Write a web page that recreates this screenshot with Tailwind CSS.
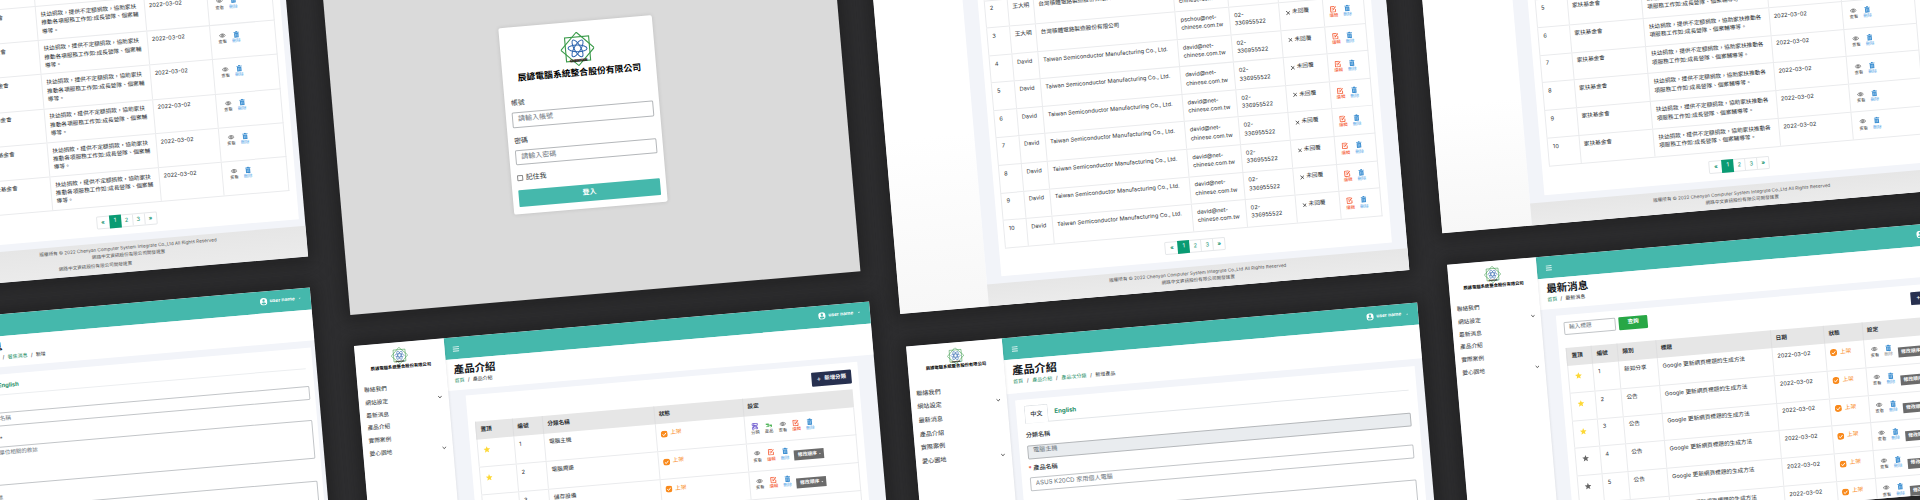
<!DOCTYPE html>
<html>
<head>
<meta charset="utf-8">
<title>Admin screens showcase</title>
<script src="https://cdn.jsdelivr.net/npm/@tailwindcss/browser@4"></script>
</head>
<body class="bg-[#303032]">
<svg class="hidden" xmlns="http://www.w3.org/2000/svg">
  <symbol id="eye" viewBox="0 0 16 16"><path d="M1 8C4 3.2 12 3.2 15 8C12 12.8 4 12.8 1 8Z" fill="none" stroke="#444" stroke-width="1.2"/><circle cx="8" cy="8" r="2.6" fill="none" stroke="#444" stroke-width="1.3"/><circle cx="8" cy="8" r="1" fill="#444"/></symbol>
  <symbol id="trash" viewBox="0 0 16 16"><path d="M2 2.5H5.5L6.5 .5H9.5L10.5 2.5H14V4.2H2Z" fill="#3d8fd1"/><path d="M3 5H13V15.5H3Z" fill="#3d8fd1"/><path d="M6.3 7V13M9.7 7V13" stroke="#d7eafa" stroke-width="1.1"/></symbol>
  <symbol id="edit" viewBox="0 0 16 16"><path d="M13 8V14.5H2V2H11" fill="none" stroke="#f4552c" stroke-width="1.8"/><path d="M4.5 6H8M4.5 9H6" stroke="#f4552c" stroke-width="1.3"/><path d="M14.5 3L8 10.5L5.8 11.6L6.6 9L13 1.8Z" fill="#f4552c"/></symbol>
  <symbol id="tree" viewBox="0 0 16 16"><path d="M2 1.5H14V6H2ZM2 10.5H6V14.5H2ZM10 10.5H14V14.5H10ZM4 10.5V8H12V10.5M8 6V8M6 1.5V6" fill="none" stroke="#5b45c9" stroke-width="1.6"/></symbol>
  <symbol id="goods" viewBox="0 0 16 16"><path d="M1 4H8V7H15V11H11V9H5V7H1Z" fill="#3fae49"/><path d="M2 11H9M12 13L15 11" stroke="#3fae49" stroke-width="1.6"/></symbol>
  <symbol id="check" viewBox="0 0 16 16"><circle cx="8" cy="8" r="8" fill="#f98a1c"/><path d="M4 8.3L7 11L12 5.4" fill="none" stroke="#fff" stroke-width="2"/></symbol>
  <symbol id="star" viewBox="0 0 16 16"><path d="M8 .5L10.1 5.8L15.8 6.2L11.4 9.8L12.8 15.3L8 12.3L3.2 15.3L4.6 9.8L.2 6.2L5.9 5.8Z" fill="currentColor"/></symbol>
  <symbol id="cross" viewBox="0 0 16 16"><path d="M1 1L15 15M15 1L1 15" stroke="#222" stroke-width="2.2"/></symbol>
  <symbol id="chev" viewBox="0 0 16 16"><path d="M2 4.5L8 11L14 4.5" fill="none" stroke="#333" stroke-width="2.6"/></symbol>
  <symbol id="user" viewBox="0 0 16 16"><circle cx="8" cy="8" r="7.8" fill="#fff"/><circle cx="8" cy="5.6" r="2.5" fill="#45b8ac"/><path d="M3.2 12C4.4 8.8 11.6 8.8 12.8 12C10.5 14.4 5.5 14.4 3.2 12Z" fill="#45b8ac"/></symbol>
  <symbol id="logo" viewBox="0 0 40 40">
    <g fill="none" stroke="#3b9b4b" stroke-width="1.3"><rect x="6" y="6" width="28" height="28"/><path d="M20 .6L39.4 20L20 39.4L.6 20Z"/></g>
    <g fill="none" stroke="#2f66ae" stroke-width="1.2"><ellipse cx="20" cy="19.4" rx="11" ry="3.8" transform="rotate(5 20 19.4)"/><ellipse cx="20" cy="19.4" rx="11" ry="3.8" transform="rotate(65 20 19.4)"/><ellipse cx="20" cy="19.4" rx="11" ry="3.8" transform="rotate(125 20 19.4)"/></g>
    <text x="20" y="34.8" font-family="Inter" font-size="3.9" font-weight="900" text-anchor="middle" fill="#32201f" stroke="#32201f" stroke-width=".3">CHENYAN</text>
  </symbol>
</svg>

<main class="relative h-[500px] w-[1920px] overflow-hidden bg-[#303032] font-['Inter','Noto_Sans_CJK_TC',sans-serif] text-[5.65px] leading-[8.4px] text-[#2b2f33] [text-rendering:geometricPrecision]">
  <div id="stage" class="absolute left-0 top-0 h-0 w-0 origin-top-left -rotate-[4.92deg]"></div>
</main>

<script>
const icon = (id, cls) => `<svg class="${cls} shrink-0"><use href="#${id}"/></svg>`;
const COMPANY = '辰諺電腦系統整合股份有限公司';

const act = (id, label, cls) => `<div class="flex w-[13.8px] flex-col items-center gap-[1.2px] text-[4.3px] leading-[5px] ${cls}">${icon(id, 'size-[7px]')}<span class="whitespace-nowrap">${label}</span></div>`;
const view = act('eye', '查看', 'text-[#444]');
const edit = act('edit', '編輯', 'text-[#f4552c]');
const del = act('trash', '刪除', 'text-[#4aa0e6]');
const delGray = act('trash', '刪除', 'text-[#8a8a8a]');
const order = `<div class="ml-[2.5px] mt-[4px] flex h-[10px] w-[30px] shrink-0 items-center justify-center gap-[2px] bg-[#6b6b6b] text-[4.8px] font-bold text-white">修改順序<span class="border-x-[1px] border-t-[1px] border-x-transparent border-t-white"></span></div>`;
const acts = (...a) => `<div class="flex pl-[2.8px] pt-[6.4px]">${a.join('')}</div>`;
const txt = (t, cls = '') => `<div class="whitespace-nowrap pl-[4.2px] pt-[4.9px] ${cls}">${t}</div>`;
const star = c => `<div class="pl-[5.4px] pt-[7px] ${c}">${icon('star', 'size-[7px]')}</div>`;
const onShelf = `<div class="flex items-center gap-[2.8px] pl-[4px] pt-[6px] text-[#f98a1c]">${icon('check', 'size-[7.2px]')}上架</div>`;
const noReply = `<div class="flex items-center gap-[2px] whitespace-nowrap pl-[6px] pt-[5.8px]">${icon('cross', 'size-[4.8px]')}未回覆</div>`;

const row = (grid, h, cells) => `<div class="grid ${grid} ${h} border-b border-r border-[#eaebed]">${cells.map(c => `<div class="border-l border-[#eaebed]">${c}</div>`).join('')}</div>`;
const head = (grid, names) => `<div class="grid ${grid} h-[17.7px] bg-[#e6e6e6] font-bold">${names.map(n => `<div class="flex items-center border-l border-[#dededf] pl-[4px]">${n}</div>`).join('')}</div>`;

const pager = `<div class="mx-auto flex h-[13.4px] w-[61px] rounded-[1.5px] border border-[#e6e8ea] text-center text-[5.6px] leading-[12px] text-[#15936f]"><span class="w-[12px] font-bold">«</span><span class="-my-px w-[12px] bg-[#0a9b73] leading-[13.4px] text-white">1</span><span class="w-[12px] border-r border-[#e6e8ea]">2</span><span class="w-[12px] border-r border-[#e6e8ea]">3</span><span class="w-[11px] font-bold">»</span></div>`;
const footLines = `<div class="whitespace-nowrap text-[4.6px]">版權所有 © 2022 Chenyan Computer System Integrate Co.,Ltd All Rights Reserved</div><div class="text-[4.6px]">網路中文資訊股份有限公司開發建置</div>`;

const topPanel = (box, side, foot, pad, card, body) => `
<section class="absolute ${box} flex overflow-hidden bg-white shadow-[0_0_18px_6px_rgba(20,20,20,0.55)]">
  <aside class="${side} shrink-0 bg-gradient-to-b from-white via-white to-[#f7f7f7]"></aside>
  <div class="flex min-w-0 flex-1 flex-col justify-end bg-[#f2f4f9]">
    <div class="flex flex-1 flex-col justify-end ${pad}"><div class="flex flex-1 flex-col justify-end bg-white ${card}">${body}</div></div>
    <footer class="${foot} shrink-0 bg-gradient-to-b from-[#e6e6e6] to-[#ebebeb] pt-[4.6px] text-center leading-[7.1px] text-[#555]">${footLines}</footer>
  </div>
</section>`;

const sidebar = (w, gap, first, size) => `
<aside class="${w} relative z-10 shrink-0 bg-white shadow-[0_0_3px_rgba(0,0,0,0.12)]">
  <div class="flex flex-col items-center pt-[5px] text-center">${icon('logo', 'size-[17px]')}<div class="mt-[0.5px] whitespace-nowrap text-[4.34px] font-bold leading-[6.6px] text-black">${COMPANY}</div></div>
  <nav class="${first} ${size} flex flex-col px-[6.1px]">${['聯絡我們', '網站設定', '最新消息', '產品介紹', '實際案例', '愛心園地'].map((m, i) => `<div class="flex ${gap} items-center justify-between"><span>${m}</span>${i === 1 || i === 5 ? icon('chev', 'size-[4.6px] -translate-y-[1px]') : ''}</div>`).join('')}</nav>
</aside>`;

const crumbs = (links, last) => links.map(l => `<span class="text-[#1f8f67]">${l}</span><span>/</span>`).join('') + `<span>${last}</span>`;
const topbar = (h) => `
<header class="${h} flex shrink-0 items-center justify-between bg-[#45b8ac] pl-[8.6px] pr-[10px] text-white">
  <svg class="h-[5.4px] w-[6.4px] translate-y-[1px]" viewBox="0 0 12 10"><path d="M0 1H12M0 5H12M0 9H12" stroke="#fff" stroke-width="1.5"/></svg>
  <div class="flex -translate-y-[0.6px] items-center gap-[2.4px] text-[4.9px] font-bold">${icon('user', 'size-[7.6px]')}user name<span class="ml-[2px] border-x-[1px] border-t-[1px] border-x-transparent border-t-white"></span></div>
</header>`;
const screen = (box, side, barH, titleBox, titleSize, title, trail, body) => `
<section class="absolute ${box} flex overflow-hidden bg-[#f2f4f9] shadow-[0_0_18px_6px_rgba(20,20,20,0.55)]">
  ${side}
  <div class="flex min-w-0 flex-1 flex-col">
    ${topbar(barH)}
    <div class="${titleBox} shrink-0 bg-white pl-[7.6px] pt-[4.2px]">
      <h1 class="${titleSize} whitespace-nowrap font-bold leading-[13px] text-[#15181c]">${title}</h1>
      <div class="mt-[2.2px] flex gap-[3.2px] whitespace-nowrap text-[5px] leading-[7px]">${trail}</div>
    </div>
    ${body}
  </div>
</section>`;

/* donation list, narrow */
const gA = 'grid-cols-[26px_66px_108.7px_63.2px_66.1px]';
const bodyA = `<div class="border-t border-[#eaebed]">${[4, 5, 6, 7, 8, 9, 10].map(n => row(gA, 'h-[34.15px]', [
  txt(n), txt('家扶基金會'), txt('扶幼捐款，提供不定額捐款，協助家扶<br>推動各項服務工作如:成長營隊、個案輔<br>導等。'), txt('2022-03-02'), acts(view, del).replace('pl-[2.8px]', 'pl-[4.5px]')])).join('')}</div><div class="pb-[6.6px] pt-[9px]">${pager}</div>`;
const panelA = `
<section class="absolute left-[-164px] top-[-60px] flex h-[341.8px] w-[448.6px] flex-col overflow-hidden bg-[#f2f4f9] shadow-[0_0_18px_6px_rgba(20,20,20,0.55)]">
  <div class="mb-[6.6px] ml-[99px] mr-[5.4px] flex min-h-0 flex-1 flex-col justify-end bg-white px-[7px]">${bodyA}</div>
  <footer class="h-[31.3px] shrink-0 bg-gradient-to-b from-[#e6e6e6] to-[#ebebeb] pt-[4.6px] text-center leading-[7.2px] text-[#555]">
    <div class="pl-[92px]">${footLines}</div><div class="pl-[24px] pt-[1px] text-[4.6px]">網路中文資訊股份有限公司開發建置</div>
  </footer>
</section>`;

/* login */
const field = (label, ph) => `<div class="text-[6.8px] leading-[9px]">${label}</div><div class="mt-[5px] flex h-[15.8px] items-center rounded-[1.5px] border border-[#b4b7ba] pl-[4.8px] text-[7px] text-[#6c757d]">${ph}</div>`;
const panelB = `
<section class="absolute left-[322.3px] top-[-10px] h-[353.7px] w-[512px] bg-[#dadada] pl-[171.7px] pt-[80.9px] shadow-[0_0_18px_6px_rgba(20,20,20,0.55)]">
  <div class="h-[187.6px] w-[154px] rounded-[2px] bg-white px-[6.3px] pt-[10.4px] shadow-[0_0_4px_rgba(0,0,0,0.12)]">
    <div class="flex flex-col items-center">${icon('logo', 'size-[34.5px]')}<div class="whitespace-nowrap text-[8.86px] font-bold leading-[14px] text-black">${COMPANY}</div></div>
    <div class="mt-[12px]">${field('帳號', '請輸入帳號')}</div>
    <div class="mt-[8px]">${field('密碼', '請輸入密碼')}</div>
    <div class="mt-[8px] flex items-center gap-[2.6px] text-[6.9px] leading-[9px]"><span class="size-[5.8px] rounded-[1px] border border-[#888]"></span>記住我</div>
    <div class="mt-[7.6px] flex h-[17.2px] items-center justify-center rounded-[1px] bg-[#45b8ac] text-[7px] font-bold text-white">登入</div>
  </div>
</section>`;

/* contact list */
const gC = 'grid-cols-[22.5px_26px_140.4px_53.8px_49.5px_44.5px_40.7px]';
const people = [['王大明', '台灣積體電路製造股份有限公司', 'pschou'], ['王大明', '台灣積體電路製造股份有限公司', 'pschou'], ['王大明', '台灣積體電路製造股份有限公司', 'pschou']];
const bodyC = [1, 2, 3, 4, 5, 6, 7, 8, 9, 10].map(n => {
  const p = people[n - 1] || ['David', 'Taiwan Semiconductor Manufacturing Co., Ltd.', 'david'];
  return row(gC, 'h-[27.57px]', [txt(n), txt(p[0]), txt(p[1]), txt(p[2] + '@net-<br>chinese.com.tw'), txt('02-<br>336955522'), noReply, acts(edit, del)]);
}).join('') + `<div class="pb-[6.7px] pt-[7.2px]">${pager}</div>`;
const panelC = topPanel('left-[869.5px] top-[40px] h-[350.3px] w-[511.2px]', 'w-[89.5px]', 'h-[22.6px]', 'px-[15px] pb-[6.8px]', 'px-[6.4px]', bodyC);

/* donation list, wide */
const gF = 'grid-cols-[31.1px_74.7px_125.4px_73.3px_74.1px]';
const bodyF = [4, 5, 6, 7, 8, 9, 10].map(n => row(gF, 'h-[27.85px]', [txt(n), txt('家扶基金會'), txt('扶幼捐款，提供不定額捐款，協助家扶推動各<br>項服務工作如:成長營隊、個案輔導等。'), txt('2022-03-02'), acts(view, del).replace('pl-[2.8px]', 'pl-[3.9px]')])).join('') + `<div class="pb-[6.4px] pt-[8px]">${pager}</div>`;
const panelF = topPanel('left-[1416.7px] top-[100px] h-[256.1px] w-[514px]', 'w-[90px]', 'h-[21.7px]', 'px-[15px] pb-[7.7px]', 'pl-[7.8px] pr-[7.6px]', bodyF);

/* news form */
const panelA2 = screen('left-[-77px] top-[312.8px] h-[240px] w-[361.4px]', '', 'h-[22.1px]', 'h-[31.6px]', 'text-[10.5px]', '最新消息', crumbs(['首頁', '最新消息', '著焦消息'], '新增'), `
  <div class="ml-[8px] mr-[4px] mt-[7px] flex-1 bg-white pl-[7px] pr-[5px] pt-[4px]">
    <div class="mr-[2px] flex h-[17px] items-center border-b border-[#eceef0]"><span class="w-[27px] pl-[6px]">中文</span><span class="text-[5.8px] font-bold text-[#1f8f67]">English</span></div>
    <div class="mt-[7px] leading-[8px]">標題</div>
    <div class="mt-[1.5px] flex h-[13.6px] items-center rounded-[1.5px] border border-[#c2c5c8] pl-[8px] text-[#6c757d]">請輸入名稱</div>
    <div class="mt-[9px] leading-[8px]">單位敘述 <span class="text-[#444]">*</span></div>
    <div class="mt-[3px] h-[39.6px] rounded-[1.5px] border border-[#c2c5c8] pl-[5px] pt-[2.6px] text-[5.5px] text-[#6c757d]">請輸入單位相關的敘述</div>
    <div class="mt-[9px] leading-[8px] text-[#555]">產品描述</div>
    <div class="mt-[4.6px] h-[40px] rounded-[1.5px] border border-[#c2c5c8]"></div>
  </div>`);

/* product categories */
const gD = 'grid-cols-[37px_30px_111.8px_89px_110.6px]';
const addBtn = t => `<div class="flex h-[13.8px] w-[40.6px] shrink-0 items-center justify-center gap-[3.4px] rounded-[1px] bg-[#27304f] text-[5.4px] font-bold text-white"><span class="text-[7px] font-normal">+</span>${t}</div>`;
const Y = 'text-[#fdd835]', K = 'text-[#666]';
const panelD = screen('left-[323.3px] top-[375px] h-[260px] w-[516.4px]', sidebar('w-[89.4px]', 'h-[12.7px]', 'mt-[11px]', 'text-[5.7px]'), 'h-[21.7px]', 'h-[31.1px]', 'text-[10.5px]', '產品介紹', crumbs(['首頁'], '產品介紹'), `
  <div class="ml-[17.3px] mr-[16.6px] mt-[6.7px] flex-1 bg-white px-[7px] pt-[6.8px]">
    <div class="mb-[6.4px] flex justify-end">${addBtn('新增分類')}</div>
    ${head(gD, ['置頂', '編號', '分類名稱', '狀態', '設定'])}
    ${[['電腦主機', acts(act('tree', '分類', 'text-[#444]'), act('goods', '產品', 'text-[#444]'), view, edit, del)], ['電腦周邊', acts(view, edit, del, order)], ['儲存設備', acts(view, edit, del, order)], ['網路設備', acts(view, edit, del, order)]].map((r, i) => row(gD, 'h-[27.85px]', [star(Y), txt(i + 1), txt(r[0]), onShelf, r[1]])).join('')}
  </div>`);

/* product form */
const panelE = screen('left-[873px] top-[422.7px] h-[260px] w-[512.6px]', sidebar('w-[96.1px]', 'h-[13.6px]', 'mt-[13.4px]', 'text-[6.1px]'), 'h-[22.7px]', 'h-[34.1px]', 'text-[11.2px]', '產品介紹', crumbs(['首頁', '產品介紹', '產品次分類'], '新增產品').replace(/<span>\//g, '<span class="mx-[0.5px]">/'), `
  <div class="mx-[7.8px] mt-[6.8px] flex-1 bg-white px-[7.8px] pt-[6.2px] text-[6.1px]">
    <div class="flex h-[18px] border-b border-[#e3e6e9]"><span class="-mb-px flex w-[24.6px] items-center justify-center rounded-t-[1.5px] border border-b-0 border-[#e3e6e9] bg-white font-medium">中文</span><span class="flex items-center pl-[6px] font-bold text-[#1f8f67]">English</span></div>
    <div class="mt-[9px] font-medium leading-[8px]">分類名稱</div>
    <div class="mt-[4.3px] flex h-[13.9px] items-center rounded-[1.5px] border border-[#b4b7ba] bg-[#e9ecef] pl-[5px] text-[#6c757d]">電腦主機</div>
    <div class="mt-[6.4px] font-medium leading-[8px]"><span class="text-[#e3342f]">*</span> 產品名稱</div>
    <div class="mt-[3.8px] flex h-[14px] items-center rounded-[1.5px] border border-[#c2c5c8] pl-[5px] text-[#6c757d]">ASUS K20CD 家用個人電腦</div>
    <div class="mt-[21px] h-[40px] rounded-[1.5px] border border-[#c2c5c8]"></div>
  </div>`);

/* news list */
const gG = 'grid-cols-[25px_26px_38.6px_115.3px_53px_38.6px_91.5px]';
const panelG = screen('left-[1418.9px] top-[388px] h-[270px] w-[522px]', sidebar('w-[89.4px]', 'h-[12.7px]', 'mt-[11px]', 'text-[5.7px]'), 'h-[21.7px]', 'h-[31.1px]', 'text-[10.5px]', '最新消息', crumbs(['首頁'], '最新消息'), `
  <div class="ml-[14.8px] mr-[15px] mt-[6.8px] flex-1 bg-white px-[7.2px] pt-[7px]">
    <div class="mb-[12.8px] flex gap-[3px]"><div class="flex h-[13.8px] w-[52px] items-center rounded-[1.5px] border border-[#c2c5c8] pl-[4px] text-[#6c757d]">輸入標題</div><div class="flex h-[13.8px] w-[28.6px] items-center justify-center rounded-[1px] bg-[#28a745] font-bold text-white">查詢</div><div class="ml-auto">${addBtn('新增消息')}</div></div>
    ${head(gG, ['置頂', '編號', '類別', '標題', '日期', '狀態', '設定'])}
    ${[1, 2, 3, 4, 5, 6].map(n => row(gG, 'h-[27.85px]', [star(n < 4 ? Y : K), txt(n), txt(n === 1 ? '新知分享' : '公告'), txt('Google 更新網頁標題的生成方法'), txt('2022-03-02'), onShelf, acts(view, n === 1 ? delGray : del, order)])).join('')}
  </div>`);

document.getElementById('stage').innerHTML = panelA + panelB + panelC + panelF + panelA2 + panelD + panelE + panelG;
</script>
</body>
</html>
